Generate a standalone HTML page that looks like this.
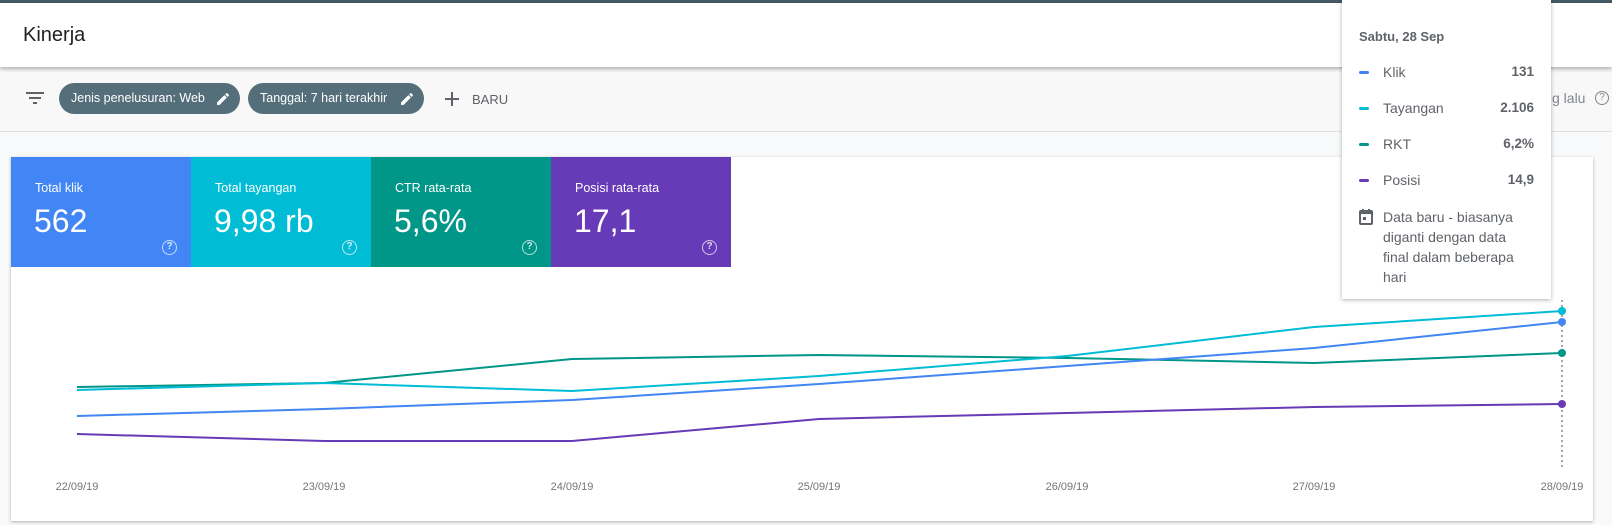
<!DOCTYPE html>
<html><head><meta charset="utf-8"><style>
*{box-sizing:border-box;margin:0;padding:0}
body{width:1612px;height:525px;overflow:hidden;background:#f8f9fa;font-family:"Liberation Sans",sans-serif;position:relative}
.top{position:absolute;left:0;top:0;width:1612px;height:3px;background:#455a64}
.hdr{position:absolute;left:0;top:3px;width:1612px;height:64px;background:#fff;box-shadow:0 2px 4px rgba(0,0,0,.3);z-index:2}
.hdr h1{position:absolute;left:23px;top:21px;font-size:20px;font-weight:normal;color:#202124}
.fbar{position:absolute;left:0;top:67px;width:1612px;height:65px;background:#f8f8f8;border-bottom:1px solid #e0e0e0}
.chip{position:absolute;top:16px;height:31px;border-radius:16px;background:#546e7a;color:#fff;font-size:12.5px;line-height:31px;padding-left:12px}
.chip svg{position:absolute;right:9px;top:8px}
.card{position:absolute;left:11px;top:157px;width:1582px;height:364px;background:#fff;box-shadow:0 1px 3px rgba(0,0,0,.3)}
.tile{position:absolute;top:0;width:180px;height:110px;color:#fff}
.tile .l{position:absolute;left:24px;top:24px;font-size:12.5px}
.tile .v{position:absolute;left:23px;top:46px;font-size:32px}
.tile .q{position:absolute;left:151px;top:83px;width:15px;height:15px;border:1.5px solid rgba(255,255,255,.7);border-radius:50%;font-size:10px;line-height:12px;text-align:center;color:rgba(255,255,255,.8);font-weight:bold}
.tip{position:absolute;left:1342px;top:0;width:209px;height:299px;background:#fff;box-shadow:0 1px 4px rgba(0,0,0,.3);z-index:5;color:#5f6368;font-size:14px}
.tip .d{position:absolute;left:17px;top:29px;font-weight:bold;font-size:13px;color:#5f6368}
.row{position:absolute;left:17px;width:175px;height:20px}
.row i{position:absolute;left:0;top:8px;width:10px;height:3px;border-radius:2px}
.row span{position:absolute;left:24px;top:1px}
.row b{position:absolute;right:0;top:1px;font-size:13.5px;color:#5f6368}
.note{position:absolute;left:41px;top:207px;width:148px;line-height:20px;font-size:14px}
.xl{position:absolute;top:481px;font-size:11px;color:#757575;width:70px;text-align:center}
</style></head><body>
<div class="top"></div>
<div class="hdr"><h1>Kinerja</h1></div>
<div class="fbar">
 <svg style="position:absolute;left:25px;top:24px" width="20" height="14"><rect x="1" y="1" width="18" height="2" fill="#5f6368"/><rect x="4" y="6" width="12" height="2" fill="#5f6368"/><rect x="8" y="11" width="4" height="2" fill="#5f6368"/></svg>
 <div class="chip" style="left:59px;width:181px">Jenis penelusuran: Web<svg width="16" height="16" viewBox="0 0 24 24"><path d="M3 17.25V21h3.75L17.8 9.94l-3.75-3.75L3 17.25zM20.7 7.04a1 1 0 000-1.41l-2.34-2.34a1 1 0 00-1.410 0l-1.83 1.83 3.75 3.75 1.83-1.83z" fill="#fff"/></svg></div>
 <div class="chip" style="left:248px;width:176px">Tanggal: 7 hari terakhir<svg width="16" height="16" viewBox="0 0 24 24"><path d="M3 17.25V21h3.75L17.8 9.94l-3.75-3.75L3 17.25zM20.7 7.04a1 1 0 000-1.41l-2.34-2.34a1 1 0 00-1.41 0l-1.83 1.83 3.75 3.75 1.83-1.83z" fill="#fff"/></svg></div>
 <svg style="position:absolute;left:444px;top:24px" width="16" height="16"><rect x="7" y="1" width="2" height="14" fill="#5f6368"/><rect x="1" y="7" width="14" height="2" fill="#5f6368"/></svg>
 <div style="position:absolute;left:472px;top:25px;font-size:13px;color:#5f6368">BARU</div>
 <div style="position:absolute;left:1552px;top:23px;font-size:14px;color:#80868b">g lalu</div>
 <div style="position:absolute;left:1595px;top:24px;width:14px;height:14px;border:1.3px solid #80868b;border-radius:50%;font-size:10px;line-height:12px;text-align:center;color:#80868b">?</div>
</div>
<div class="card">
 <div class="tile" style="left:0;background:#4285f4"><div class="l">Total klik</div><div class="v">562</div><div class="q">?</div></div>
 <div class="tile" style="left:180px;background:#00bcd4"><div class="l">Total tayangan</div><div class="v">9,98 rb</div><div class="q">?</div></div>
 <div class="tile" style="left:360px;background:#009688"><div class="l">CTR rata-rata</div><div class="v">5,6%</div><div class="q">?</div></div>
 <div class="tile" style="left:540px;background:#673ab7"><div class="l">Posisi rata-rata</div><div class="v">17,1</div><div class="q">?</div></div>
</div>
<svg style="position:absolute;left:0;top:0;z-index:3" width="1612" height="525">
 <line x1="1562" y1="300" x2="1562" y2="468" stroke="#777" stroke-width="1.3" stroke-dasharray="2,3"/>
 <g fill="none" stroke-width="2">
 <polyline stroke="#009688" points="77,387 324,383 572,359 819,355 1067,358 1314,363 1562,353"/>
 <polyline stroke="#00bcd4" points="77,390 324,383 572,391 819,376 1067,356 1314,327 1562,311"/>
 <polyline stroke="#4285f4" points="77,416 324,409 572,400 819,384 1067,366 1314,348 1562,322"/>
 <polyline stroke="#673ab7" points="77,434 324,441 572,441 819,419 1067,413 1314,407 1562,404"/>
 </g>
 <circle cx="1562" cy="311" r="4" fill="#00bcd4"/><circle cx="1562" cy="322" r="4" fill="#4285f4"/><circle cx="1562" cy="353" r="4" fill="#009688"/><circle cx="1562" cy="404" r="4" fill="#673ab7"/>
</svg>
<div class="xl" style="left:42px">22/09/19</div>
<div class="xl" style="left:289px">23/09/19</div>
<div class="xl" style="left:537px">24/09/19</div>
<div class="xl" style="left:784px">25/09/19</div>
<div class="xl" style="left:1032px">26/09/19</div>
<div class="xl" style="left:1279px">27/09/19</div>
<div class="xl" style="left:1527px">28/09/19</div>
<div class="tip">
 <div class="d">Sabtu, 28 Sep</div>
 <div class="row" style="top:63px"><i style="background:#4285f4"></i><span>Klik</span><b>131</b></div>
 <div class="row" style="top:99px"><i style="background:#00bcd4"></i><span>Tayangan</span><b>2.106</b></div>
 <div class="row" style="top:135px"><i style="background:#009688"></i><span>RKT</span><b>6,2%</b></div>
 <div class="row" style="top:171px"><i style="background:#673ab7"></i><span>Posisi</span><b>14,9</b></div>
 <svg style="position:absolute;left:17px;top:209px" width="14" height="16" viewBox="0 0 14 16"><rect x="1" y="2" width="12" height="13" rx="1" fill="none" stroke="#5f6368" stroke-width="2"/><rect x="1" y="2" width="12" height="3" fill="#5f6368"/><rect x="3" y="0" width="2" height="3" fill="#5f6368"/><rect x="9" y="0" width="2" height="3" fill="#5f6368"/><rect x="4" y="8" width="3" height="3" fill="#5f6368"/></svg>
 <div class="note">Data baru - biasanya diganti dengan data final dalam beberapa hari</div>
</div>
</body></html>
